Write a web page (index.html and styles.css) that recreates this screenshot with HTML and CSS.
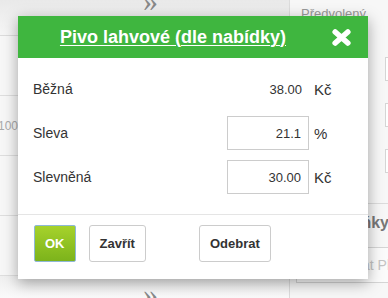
FILE: index.html
```html
<!DOCTYPE html>
<html lang="cs">
<head>
<meta charset="utf-8">
<title>Pivo lahvové</title>
<link rel="stylesheet" href="styles.css">
</head>
<body>
<div class="page">
  <div class="main">
    <div class="band band-top"><span class="quote">»</span></div>
    <div class="row"></div>
    <div class="row"><span class="faded">100</span></div>
    <div class="row"></div>
    <div class="row"></div>
    <div class="band band-bottom"><span class="quote">»</span></div>
  </div>
  <div class="side">
    <div class="side-label">Předvolený</div>
    <div class="side-boxes">
      <div class="side-box"></div>
      <div class="side-box"></div>
      <div class="side-box"></div>
    </div>
    <div class="side-section">
      <div class="side-head">Doplňky</div>
      <div class="side-input">Hledat Pl</div>
    </div>
  </div>
</div>

<div class="dialog">
  <div class="dialog-head">
    <a class="dialog-title" href="#">Pivo lahvové (dle nabídky)</a>
    <svg class="close" width="19" height="17" viewBox="0 0 19 17" aria-label="Zavřít">
      <path d="M3.2 3 L15.8 14 M15.8 3 L3.2 14" stroke="#fff" stroke-width="5.6" stroke-linecap="round"/>
    </svg>
  </div>
  <div class="dialog-body">
    <div class="field">
      <span class="label">Běžná</span>
      <span class="value">38.00</span>
      <span class="unit">Kč</span>
    </div>
    <div class="field">
      <span class="label">Sleva</span>
      <input class="input" type="text" value="21.1">
      <span class="unit">%</span>
    </div>
    <div class="field">
      <span class="label">Slevněná</span>
      <input class="input" type="text" value="30.00">
      <span class="unit">Kč</span>
    </div>
  </div>
  <div class="dialog-foot">
    <button class="btn btn-ok">OK</button>
    <button class="btn">Zavřít</button>
    <button class="btn btn-remove">Odebrat</button>
  </div>
</div>
</body>
</html>
```

FILE: styles.css
```css
* { box-sizing: border-box; }

html, body {
  margin: 0;
  padding: 0;
}

body {
  width: 388px;
  height: 298px;
  overflow: hidden;
  font-family: "Liberation Sans", Arial, sans-serif;
  background: #f6f6f6;
  color: #333;
}

.page {
  display: flex;
  height: 298px;
}

.main {
  width: 289px;
  display: flex;
  flex-direction: column;
  background: #f7f7f7;
}

.band {
  display: flex;
  justify-content: center;
  overflow: hidden;
  background: linear-gradient(#e9e9e9, #f6f6f6);
}

.band-top {
  height: 36px;
  align-items: flex-end;
  border-bottom: 1px solid #dcdcdc;
}

.band-top .quote {
  margin-bottom: 22px;
}

.band-bottom {
  flex: 1;
  align-items: flex-start;
  background: linear-gradient(#efefef, #fafafa);
}

.band-bottom .quote {
  margin-top: 6px;
}

.quote {
  font-family: "Liberation Serif", serif;
  font-size: 30px;
  line-height: 24px;
  color: #888;
  margin-left: 12px;
}

.row {
  height: 60px;
  border-bottom: 1px solid #dedede;
  display: flex;
  align-items: center;
}

.faded {
  font-size: 12px;
  color: #aaa;
  margin-left: -2px;
}

.side {
  flex: 1;
  border-left: 1px solid #dcdcdc;
  background: #f7f7f7;
  padding: 6px 0 0 4px;
  display: flex;
  flex-direction: column;
  overflow: hidden;
}

.side-label {
  font-size: 13px;
  color: #999;
  padding-left: 7px;
  white-space: nowrap;
}

.side-boxes {
  display: flex;
  flex-direction: column;
  gap: 22px;
  padding: 36px 0 0 91px;
}

.side-box {
  height: 24px;
  border: 1px solid #d5d5d5;
  border-right: none;
  background: #fff;
}

.side-section {
  margin-top: 30px;
  border-top: 1px solid #dcdcdc;
  padding: 10px 0 0 2px;
}

.side-head {
  font-size: 16px;
  font-weight: bold;
  color: #777;
  text-align: right;
  white-space: nowrap;
  margin-right: -1px;
  height: 33px;
}

.side-input {
  height: 36px;
  border: 1px solid #d5d5d5;
  border-right: none;
  background: #fbfbfb;
  color: #c4c4c4;
  font-size: 14px;
  line-height: 34px;
  text-align: right;
  white-space: nowrap;
  margin-right: -2px;
  overflow: hidden;
}

/* Dialog */
.dialog {
  position: absolute;
  left: 18px;
  top: 16px;
  width: 350px;
  height: 263px;
  background: #fff;
  box-shadow: 0 4px 14px rgba(0, 0, 0, 0.35);
  display: flex;
  flex-direction: column;
}

.dialog-head {
  height: 42px;
  background: #3fb63f;
  display: flex;
  align-items: center;
  padding-right: 17px;
}

.dialog-title {
  flex: 1;
  text-align: center;
  color: #fff;
  font-weight: bold;
  font-size: 18px;
  text-decoration: underline;
  text-decoration-thickness: 1px;
  text-underline-offset: 2px;
}

.close {
  display: block;
  margin-left: 4px;
}

.dialog-body {
  padding: 14px 15px 20px 15px;
  display: flex;
  flex-direction: column;
  gap: 10px;
  border-bottom: 1px solid #e5e5e5;
}

.field {
  display: grid;
  grid-template-columns: 1fr 82px 39px;
  column-gap: 5px;
  align-items: center;
  height: 34px;
}

.label {
  font-size: 14px;
  color: #333;
}

.value {
  font-size: 13px;
  text-align: right;
  padding-right: 7px;
  color: #333;
}

.input {
  width: 82px;
  height: 34px;
  border: 1px solid #cccccc;
  border-radius: 0;
  padding: 0 7px;
  margin: 0;
  font-family: "Liberation Sans", Arial, sans-serif;
  font-size: 13px;
  color: #333;
  text-align: right;
  background: #fff;
}

.unit {
  font-size: 15px;
  color: #333;
}

.dialog-foot {
  display: flex;
  align-items: flex-start;
  gap: 13px;
  padding: 10px 16px 0 16px;
}

.btn {
  height: 37px;
  padding: 0 10px;
  border: 1px solid #cccccc;
  border-radius: 3px;
  background: #fff;
  font-family: "Liberation Sans", Arial, sans-serif;
  font-size: 13px;
  font-weight: bold;
  color: #333;
  margin: 0;
}

.btn-ok {
  background: linear-gradient(#a6d22c, #7cb31b);
  border-color: #8fb8d6;
  color: #fff;
  border-radius: 2px;
}

.btn-remove {
  margin-left: 40px;
}
```
